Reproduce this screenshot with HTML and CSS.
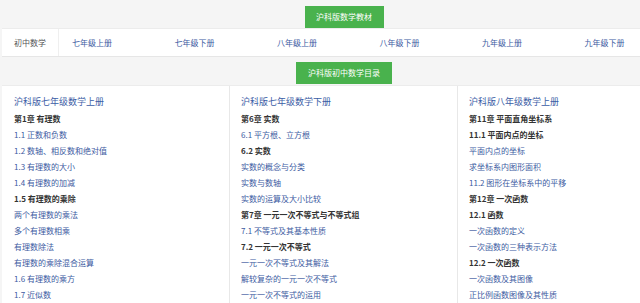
FILE: index.html
```html
<!DOCTYPE html>
<html lang="zh-CN">
<head>
    <meta charset="UTF-8">
    <meta name="viewport" content="width=device-width, initial-scale=1.0">
    <title>沪科版初中数学目录</title>
    <link rel="stylesheet" href="styles.css">
</head>
<body>
    <div class="wrap">
        <div class="btn-row"><span class="green-btn btn-books">沪科版数学教材</span></div>
        <div class="grade-nav">
            <span class="nav-label">初中数学</span>
            <a class="nav-link" href="#">七年级上册</a>
            <a class="nav-link" href="#">七年级下册</a>
            <a class="nav-link" href="#">八年级上册</a>
            <a class="nav-link" href="#">八年级下册</a>
            <a class="nav-link" href="#">九年级上册</a>
            <a class="nav-link" href="#">九年级下册</a>
        </div>

        <div class="btn-row second"><span class="green-btn btn-toc">沪科版初中数学目录</span></div>

        <div class="toc">
            <div class="toc-col">
                <a class="toc-title" href="#">沪科版七年级数学上册</a>
                <ul>
                    <li class="head">第1章 有理数</li>
                    <li><a href="#">1.1 正数和负数</a></li>
                    <li><a href="#">1.2 数轴、相反数和绝对值</a></li>
                    <li><a href="#">1.3 有理数的大小</a></li>
                    <li><a href="#">1.4 有理数的加减</a></li>
                    <li class="head">1.5 有理数的乘除</li>
                    <li><a href="#">两个有理数的乘法</a></li>
                    <li><a href="#">多个有理数相乘</a></li>
                    <li><a href="#">有理数除法</a></li>
                    <li><a href="#">有理数的乘除混合运算</a></li>
                    <li><a href="#">1.6 有理数的乘方</a></li>
                    <li><a href="#">1.7 近似数</a></li>
                </ul>
            </div>
            <div class="toc-col">
                <a class="toc-title" href="#">沪科版七年级数学下册</a>
                <ul>
                    <li class="head">第6章 实数</li>
                    <li><a href="#">6.1 平方根、立方根</a></li>
                    <li class="head">6.2 实数</li>
                    <li><a href="#">实数的概念与分类</a></li>
                    <li><a href="#">实数与数轴</a></li>
                    <li><a href="#">实数的运算及大小比较</a></li>
                    <li class="head">第7章 一元一次不等式与不等式组</li>
                    <li><a href="#">7.1 不等式及其基本性质</a></li>
                    <li class="head">7.2 一元一次不等式</li>
                    <li><a href="#">一元一次不等式及其解法</a></li>
                    <li><a href="#">解较复杂的一元一次不等式</a></li>
                    <li><a href="#">一元一次不等式的运用</a></li>
                </ul>
            </div>
            <div class="toc-col">
                <a class="toc-title" href="#">沪科版八年级数学上册</a>
                <ul>
                    <li class="head">第11章 平面直角坐标系</li>
                    <li class="head">11.1 平面内点的坐标</li>
                    <li><a href="#">平面内点的坐标</a></li>
                    <li><a href="#">求坐标系内图形面积</a></li>
                    <li><a href="#">11.2 图形在坐标系中的平移</a></li>
                    <li class="head">第12章 一次函数</li>
                    <li class="head">12.1 函数</li>
                    <li><a href="#">一次函数的定义</a></li>
                    <li><a href="#">一次函数的三种表示方法</a></li>
                    <li class="head">12.2 一次函数</li>
                    <li><a href="#">一次函数及其图像</a></li>
                    <li><a href="#">正比例函数图像及其性质</a></li>
                </ul>
            </div>
        </div>
    </div>
</body>
</html>
```

FILE: styles.css
```css
html, body { overflow: hidden; }
body { margin: 0; background-color: #f5f5f5; font-family: "Noto Sans CJK SC", "Noto Sans", sans-serif; color: #333; }
a { text-decoration: none; color: #3d5b9f; }
ul { list-style: none; margin: 0; padding: 0; }

.wrap { width: 684px; margin-left: 2px; }

/* green title buttons */
.btn-row { display: flex; justify-content: center; padding-top: 6px; }
.btn-row.second { padding-top: 5px; }
.green-btn {
    display: block;
    height: 22px;
    line-height: 22px;
    background-color: #49b24d;
    color: #fff;
    font-size: 8px;
    text-align: center;
}
.btn-books { width: 79px; }
.btn-toc { width: 96px; }

/* grade navigation */
.grade-nav {
    display: flex;
    align-items: center;
    height: 27px;
    background-color: #fff;
    border-top: 1px solid #ececec;
    border-bottom: 1px solid #e6e6e6;
    font-size: 8px;
}
.nav-label {
    width: 56px;
    height: 27px;
    line-height: 27px;
    text-align: center;
    color: #555;
    border-right: 1px solid #efefef;
}
.nav-link { width: 89.5px; padding-left: 13px; flex-shrink: 0; }

/* three column contents */
.toc {
    display: grid;
    grid-template-columns: repeat(3, 1fr);
    margin-top: 1px;
    background-color: #fff;
    border-top: 1px solid #ececec;
}
.toc-col { padding: 7px 11px 0 11px; border-right: 1px solid #e8e8e8; min-height: 230px; }
.toc-col:first-child { padding-left: 12px; }
.toc-title { display: block; font-size: 9px; line-height: 18px; color: #3a5ca5; }
.toc-col li { font-size: 8px; line-height: 16px; white-space: nowrap; }
.toc-col li.head { font-weight: bold; color: #333; }
```
